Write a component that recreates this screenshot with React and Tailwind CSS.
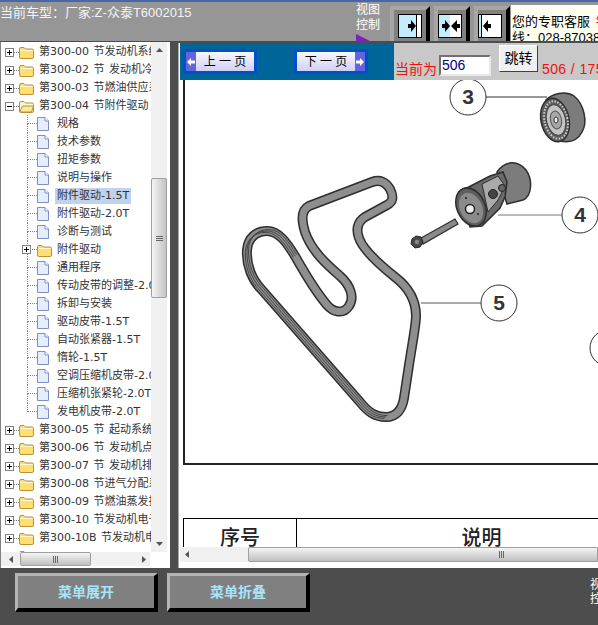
import React from "react";

const cjk = "font-['Liberation_Sans','Noto_Sans_CJK_SC',sans-serif]";

const rows = [
  { t: "第300-00 节发动机系统", top: 1 },
  { t: "第300-02 节 发动机冷却", top: 1 },
  { t: "第300-03 节燃油供应系统", top: 1 },
  { t: "第300-04 节附件驱动", top: 1, open: 1 },
  { t: "规格" },
  { t: "技术参数" },
  { t: "扭矩参数" },
  { t: "说明与操作" },
  { t: "附件驱动-1.5T", sel: 1 },
  { t: "附件驱动-2.0T" },
  { t: "诊断与测试" },
  { t: "附件驱动", folder: 1 },
  { t: "通用程序" },
  { t: "传动皮带的调整-2.0T" },
  { t: "拆卸与安装" },
  { t: "驱动皮带-1.5T" },
  { t: "自动张紧器-1.5T" },
  { t: "惰轮-1.5T" },
  { t: "空调压缩机皮带-2.0T" },
  { t: "压缩机张紧轮-2.0T" },
  { t: "发电机皮带-2.0T", last: 1 },
  { t: "第300-05 节 起动系统", top: 1 },
  { t: "第300-06 节 发动机点火", top: 1 },
  { t: "第300-07 节 发动机排放", top: 1 },
  { t: "第300-08 节进气分配系统", top: 1 },
  { t: "第300-09 节燃油蒸发排放", top: 1 },
  { t: "第300-10 节发动机电子", top: 1 },
  { t: "第300-10B 节发动机电子", top: 1 },
  { t: "", top: 1, bare: 1 },
];

const Folder = ({ open }) => (
  <svg width="15" height="13" viewBox="0 0 15 13" className="shrink-0">
    <path d="M0.5 3 Q0.5 1.5 2 1.5 L5 1.5 L6.5 3 L13 3 Q14.5 3 14.5 4.5 L14.5 11 Q14.5 12.5 13 12.5 L2 12.5 Q0.5 12.5 0.5 11 Z" fill={open ? "#fff6c8" : "#ffdf70"} stroke="#b8923a" />
    <path d="M1.5 4.5 L13.5 4.5" stroke="#fff8d8" />
    {open && <path d="M0.8 12 L3.5 6 L14.5 6 L12.5 12 Z" fill="#ffe896" stroke="#b8923a" />}
  </svg>
);

const Doc = () => (
  <svg width="12" height="14" viewBox="0 0 12 14" className="shrink-0">
    <path d="M0.5 0.5 L8 0.5 L11.5 4 L11.5 13.5 L0.5 13.5 Z" fill="#e4eefc" stroke="#7f8fc4" />
    <path d="M8 0.5 L8 4 L11.5 4" fill="#fff" stroke="#7f8fc4" />
  </svg>
);

const Box = ({ open }) => (
  <span className="w-[9px] h-[9px] border border-[#808080] bg-white flex items-center justify-center shrink-0 relative">
    <span className="w-[5px] h-px bg-black" />
    {!open && <span className="w-px h-[5px] bg-black absolute" />}
  </span>
);

const TreeRow = ({ r }) => {
  if (r.top) {
    return (
      <div className="h-[18px] flex items-center pl-[5px]">
        {r.bare ? <span className="w-[9px] shrink-0" /> : <Box open={r.open} />}
        <span className={`w-[5px] shrink-0 ${r.bare ? "" : "border-t border-dotted border-[#808080]"}`} />
        <Folder open={r.open} />
        <span className="ml-[5px] whitespace-nowrap [word-spacing:1px]">{r.t}</span>
      </div>
    );
  }
  return (
    <div className="h-[18px] flex items-center pl-[27px] relative">
      <div className="w-[10px] h-[18px] shrink-0 flex flex-col">
        <span className="h-[9px] border-l border-b border-dotted border-[#808080]" />
        {!r.last && <span className="h-[9px] border-l border-dotted border-[#808080]" />}
      </div>
      {r.folder ? <Folder /> : <Doc />}
      {r.folder && (
        <span className="absolute left-[22px] top-[4px]">
          <Box />
        </span>
      )}
      <span className={`${r.folder ? "ml-[3px]" : "ml-[6px]"} whitespace-nowrap px-[2px] h-[16px] leading-[16px] ${r.sel ? "bg-[#c1d2ec]" : ""}`}>{r.t}</span>
    </div>
  );
};

const Tri = ({ dir }) => {
  const d = { up: "M0 4 L3.5 0 L7 4 Z", down: "M0 0 L7 0 L3.5 4 Z", left: "M4 0 L4 7 L0 3.5 Z", right: "M0 0 L0 7 L4 3.5 Z" }[dir];
  const h = dir === "up" || dir === "down";
  return (
    <svg width={h ? 7 : 4} height={h ? 4 : 7} viewBox={h ? "0 0 7 4" : "0 0 4 7"}>
      <path d={d} fill="#555" />
    </svg>
  );
};

const Grip = ({ vertical }) => (
  <span className={`flex ${vertical ? "flex-col" : "flex-row"} gap-px`}>
    {[0, 1, 2].map((i) => (
      <span key={i} className={vertical ? "w-[7px] h-px bg-[#666]" : "w-px h-[7px] bg-[#666]"} />
    ))}
  </span>
);

const NavBtn = ({ next, label }) => (
  <div className="w-[74px] h-[25px] border-[3px] border-[#0050c8] bg-white flex shrink-0">
    <div className={`flex-1 flex items-center ${next ? "flex-row-reverse" : ""} bg-gradient-to-b from-[#f8f8ff] to-[#d0d0f4]`}>
      <span className="w-[10px] h-full bg-[#6464dc] flex items-center justify-center text-white">
        <svg width="8" height="8" viewBox="0 0 8 8">
          <path d={next ? "M0 2.5 H4 V0 L8 4 L4 8 V5.5 H0 Z" : "M8 2.5 H4 V0 L0 4 L4 8 V5.5 H8 Z"} fill="#fff" />
        </svg>
      </span>
      <span className="flex-1 text-center text-[12px] text-black whitespace-pre">{label}</span>
    </div>
  </div>
);

const ViewBtn = ({ split, children, first }) => (
  <div className={`h-[35px] border-t-[4px] border-l-[4px] border-r-[4px] border-t-[#a6a6a6] border-l-[#a6a6a6] border-r-black bg-[#808080] pt-[4px] ${first ? "w-[40px] pl-[4px] pr-[4px]" : "w-[36px] pr-[4px] border-l-[#808080]"}`}>
    <svg width="24" height="24" viewBox="0 0 24 24" className="block">
      <rect x="0.5" y="0.5" width="23" height="23" fill="#fff" stroke="#000" />
      <rect x="1" y="1" width={split} height="22" fill="#c4ecff" />
      {children}
    </svg>
  </div>
);

const belt =
  "M247 250 C248 238 256 231 267 231 C279 231 287 243 295 256 C304 272 316 292 327 305 C333 312 343 315 349 306 C355 297 350 285 340 276 C326 264 311 250 305 232 C301 219 301 210 309 206 L372 182 C380 179 386 182 390 189 C394 197 393 202 387 205 L365 217 C357 222 356 230 359 238 C363 250 380 265 395 277 C408 287 416 300 416 316 C416 325 412 345 409 365 L404 398 C402 410 396 417 386 417 C375 417 368 412 360 402 L262 290 C252 280 246 265 247 250 Z";

const ribs = "M386 417 C375 417 368 412 360 402 L262 290 C252 280 246 265 247 250 C248 238 256 231 267 231 C279 231 287 243 295 256";

const Callout = ({ x, y, n }) => (
  <g>
    <circle cx={x} cy={y} r="18" fill="#fff" stroke="#333" strokeWidth="1" />
    <text x={x} y={y + 7} textAnchor="middle" fontSize="21" fontWeight="700" fill="#333" fontFamily="Liberation Sans">
      {n}
    </text>
  </g>
);

const Diagram = () => (
  <svg width="413" height="383" viewBox="185 80 413 383" className="block">
    <path d={belt} fill="none" stroke="#2e2e2e" strokeWidth="10" strokeLinejoin="round" />
    <path d={belt} fill="none" stroke="#8e8e8e" strokeWidth="7" strokeLinejoin="round" />
    <path d={ribs} fill="none" stroke="#3c3c3c" strokeWidth="0.9" />
    <path d={ribs} transform="translate(1.6 -1.4)" fill="none" stroke="#3c3c3c" strokeWidth="0.9" />
    <path d={ribs} transform="translate(-1.6 1.4)" fill="none" stroke="#3c3c3c" strokeWidth="0.9" />

    <path d="M486 97 H547" stroke="#333" />
    <path d="M498 215 H562" stroke="#777" />
    <path d="M421 303 H481" stroke="#555" />
    <Callout x={468} y={97} n="3" />
    <Callout x={580} y={215} n="4" />
    <Callout x={499} y={303} n="5" />
    <circle cx="608" cy="348" r="18" fill="#fff" stroke="#333" />

    {/* pulley 3 */}
    <path d="M546 100 C552 94 565 90 574 96 C584 104 588 122 582 132 C578 140 570 143 560 141 Z" fill="#7c7c7c" stroke="#2e2e2e" strokeWidth="1.5" />
    <ellipse cx="555" cy="120" rx="14" ry="22" transform="rotate(-12 555 120)" fill="#5e5e5e" stroke="#2e2e2e" strokeWidth="1.5" />
    <ellipse cx="556" cy="120" rx="11.5" ry="19" transform="rotate(-12 556 120)" fill="none" stroke="#ccc" strokeWidth="2" strokeDasharray="1.5 1.5" />
    <ellipse cx="556" cy="120" rx="9.5" ry="15.5" transform="rotate(-12 556 120)" fill="#c4c4c4" stroke="#444" />
    <ellipse cx="556" cy="120" rx="5.5" ry="9" transform="rotate(-12 556 120)" fill="#a8a8a8" stroke="#555" />
    <ellipse cx="556" cy="120" rx="2" ry="3" fill="#eee" stroke="#333" />

    {/* tensioner 4 */}
    <path d="M497 172 C505 160 518 160 526 170 C533 180 532 196 523 200 L507 204 Z" fill="#7c7c7c" stroke="#2e2e2e" strokeWidth="1.5" />
    <path d="M459 192 L490 176 L503 172 L507 182 L505 197 L500 208 L482 226 L470 227 Z" fill="#6a6a6a" stroke="#2e2e2e" strokeWidth="1.5" />
    <path d="M482 184 L498 176 L505 186 L498 200 L488 212 Z" fill="#aaa" stroke="#2e2e2e" />
    <circle cx="493" cy="194" r="4.5" fill="#444" stroke="#222" />
    <circle cx="502" cy="188" r="3.5" fill="#666" stroke="#222" />
    <ellipse cx="471" cy="207" rx="14" ry="20" transform="rotate(-25 471 207)" fill="#5e5e5e" stroke="#2e2e2e" strokeWidth="1.5" />
    <ellipse cx="471" cy="208" rx="11" ry="16" transform="rotate(-25 471 208)" fill="#8a8a8a" />
    <circle cx="470" cy="209" r="4.5" fill="#eee" stroke="#222" strokeWidth="1.5" />
    <circle cx="466" cy="198" r="1" fill="#222" />
    <circle cx="478" cy="214" r="1" fill="#222" />

    {/* bolt */}
    <path d="M421 238 L455 219 L458 224 L423 244 Z" fill="#8a8a8a" stroke="#2e2e2e" strokeWidth="1.2" />
    <path d="M412 239 L416 236 L421 237 L423 242 L420 247 L415 248 L411 244 Z" fill="#4a4a4a" stroke="#222" />
    <circle cx="417" cy="242" r="2.2" fill="#888" />
  </svg>
);

const App = () => {
  return (
    <div className={`w-[598px] h-[625px] overflow-hidden flex flex-col bg-[#4d4d4d] ${cjk}`}>
      {/* header */}
      <div className="h-[41px] shrink-0 flex bg-[#969696] border-t-2 border-[#4767a8] overflow-hidden">
        <div className="w-[356px] shrink-0 pt-[2px] text-[13px] leading-[18px] text-[#f4f4f4] whitespace-nowrap">当前车型：厂家:Z-众泰T6002015</div>
        <div className="w-[34px] shrink-0 pt-[1px] text-[12px] leading-[15px] text-white">
          <div>视图</div>
          <div>控制</div>
          <svg width="16" height="8" viewBox="0 0 16 8" className="block mt-[1px]">
            <path d="M0 0 L16 8 L0 8 Z" fill="#7f1fc4" />
          </svg>
        </div>
        <div className="flex gap-[4px] pt-[4px] shrink-0">
          <ViewBtn split="17" first>
            <rect x="18" y="1" width="1" height="22" fill="#000" />
            <path d="M10 10 H13 V6 L18 12 L13 18 V14 H10 Z" fill="#000" />
          </ViewBtn>
          <ViewBtn split="11">
            <path d="M4 10 H7 V6 L12 12 L7 18 V14 H4 Z" fill="#000" />
            <path d="M22 10 H19 V6 L13 12 L19 18 V14 H22 Z" fill="#000" />
          </ViewBtn>
          <ViewBtn split="2">
            <rect x="3" y="1" width="1" height="22" fill="#000" />
            <path d="M5 12 L10 6 V10 H13 V14 H10 V18 Z" fill="#000" />
          </ViewBtn>
        </div>
        <div className="flex-1 mt-[3px] bg-[#fffff0] pl-[1px] pt-[9px] text-[13px] leading-[16px] text-black whitespace-nowrap overflow-hidden ml-px">
          <div>
            您的专职客服 <span className="text-red-600 ml-[2px]">销</span>
          </div>
          <div>线：028-87038188</div>
        </div>
      </div>

      {/* middle */}
      <div className="h-[527px] shrink-0 flex">
        <div className="w-[170px] mt-px shrink-0 flex flex-col bg-white border-l border-[#808080] text-[11px] text-[#333] font-['DejaVu_Sans','Noto_Sans_CJK_SC',sans-serif]">
          <div className="h-[510px] flex">
            <div className="w-[151px] -ml-px pt-px overflow-hidden">
              {rows.map((r, i) => (
                <TreeRow key={i} r={r} />
              ))}
            </div>
            <div className="w-[16px] bg-[#f0f0f0] flex flex-col items-center">
              <div className="h-[16px] flex items-center justify-center"><Tri dir="up" /></div>
              <div className="h-[120px] mt-[120px] w-full bg-gradient-to-r from-[#f4f4f4] to-[#c4c4c4] border border-[#a0a0a0] rounded-[2px] flex items-center justify-center"><Grip vertical /></div>
              <div className="mt-auto h-[16px] flex items-center justify-center"><Tri dir="down" /></div>
            </div>
          </div>
          <div className="h-[14px] w-[149px] flex items-center bg-[#f0f0f0]">
            <div className="w-[19px] flex justify-center"><Tri dir="left" /></div>
            <div className="w-[71px] h-full bg-gradient-to-b from-[#f4f4f4] to-[#c0c0c0] border border-[#a0a0a0] rounded-[2px] flex items-center justify-center"><Grip /></div>
            <div className="ml-auto w-[12px] flex justify-center"><Tri dir="right" /></div>
          </div>
        </div>

        <div className="w-[8px] shrink-0" />

        <div className="w-[420px] shrink-0 mt-[2px] flex flex-col bg-white border-l border-[#a8a8a8] pl-px">
          <div className="h-[37px] shrink-0 flex bg-[#006699]">
            <div className="w-[214px] shrink-0 flex items-center pl-[3px] gap-[37px]">
              <NavBtn label="上 一 页" />
              <NavBtn next label="下 一 页" />
            </div>
            <div className="flex-1 bg-[#c8c8c8] flex items-start text-[14px] text-[#f01010] whitespace-nowrap overflow-hidden pl-px">
              <span className="mt-[17px] leading-[18px] w-[44px] shrink-0">当前为</span>
              <span className="mt-[12px] w-[52px] h-[21px] border-2 border-t-[#707070] border-l-[#707070] border-r-[#e8e8e8] border-b-[#e8e8e8] bg-white text-[#000080] leading-[17px] pl-[1px] shrink-0">506</span>
              <span className="ml-[8px] mt-[2px] w-[39px] h-[27px] shrink-0 bg-[#f0f0f0] border border-t-white border-l-white border-r-[#404040] border-b-[#404040] text-black text-center leading-[24px]">跳转</span>
              <span className="ml-[4px] mt-[17px] leading-[18px] tracking-[0.4px]">506 / 1756</span>
            </div>
          </div>

          <div className="h-[467px] shrink-0 overflow-hidden pl-[3px] bg-white">
            <div className="border-l-2 border-b-2 border-[#222] w-[415px]">
              <Diagram />
            </div>
            <div className="mt-[53px] h-[40px] w-[500px] flex border-l border-t border-black text-[20px] leading-[35px] text-[#222] font-medium font-['Noto_Sans_CJK_SC',sans-serif]">
              <div className="w-[113px] shrink-0 text-center border-r border-black">序号</div>
              <div className="w-[369px] shrink-0 text-center">说明</div>
            </div>
          </div>

          <div className="h-[15px] shrink-0 flex items-center bg-[#f0f0f0]">
            <div className="w-[14px] flex justify-center"><Tri dir="left" /></div>
            <div className="ml-[54px] flex-1 h-full bg-gradient-to-b from-[#f4f4f4] to-[#c0c0c0] border border-[#a0a0a0] rounded-l-[2px] flex items-center pl-[250px]"><Grip /></div>
          </div>
        </div>
      </div>

      {/* bottom */}
      <div className="flex-1 flex items-start pt-[5px] pl-[15px] gap-[9px] relative">
        <div className="w-[143px] h-[39px] border-t-[3px] border-l-[3px] border-r-[4px] border-b-[4px] border-t-[#b4b4b4] border-l-[#b4b4b4] border-r-black border-b-black bg-[#808080] text-[#a8e4f8] text-[14px] font-bold text-center leading-[32px]">菜单展开</div>
        <div className="w-[143px] h-[39px] border-t-[3px] border-l-[3px] border-r-[4px] border-b-[4px] border-t-[#b4b4b4] border-l-[#b4b4b4] border-r-black border-b-black bg-[#808080] text-[#a8e4f8] text-[14px] font-bold text-center leading-[32px]">菜单折叠</div>
        <div className="ml-auto w-[8px] overflow-hidden pt-[5px] text-[12px] leading-[14px] text-white whitespace-nowrap">
          <div>视图</div>
          <div>控制</div>
        </div>
      </div>
    </div>
  );
};

export default App;
